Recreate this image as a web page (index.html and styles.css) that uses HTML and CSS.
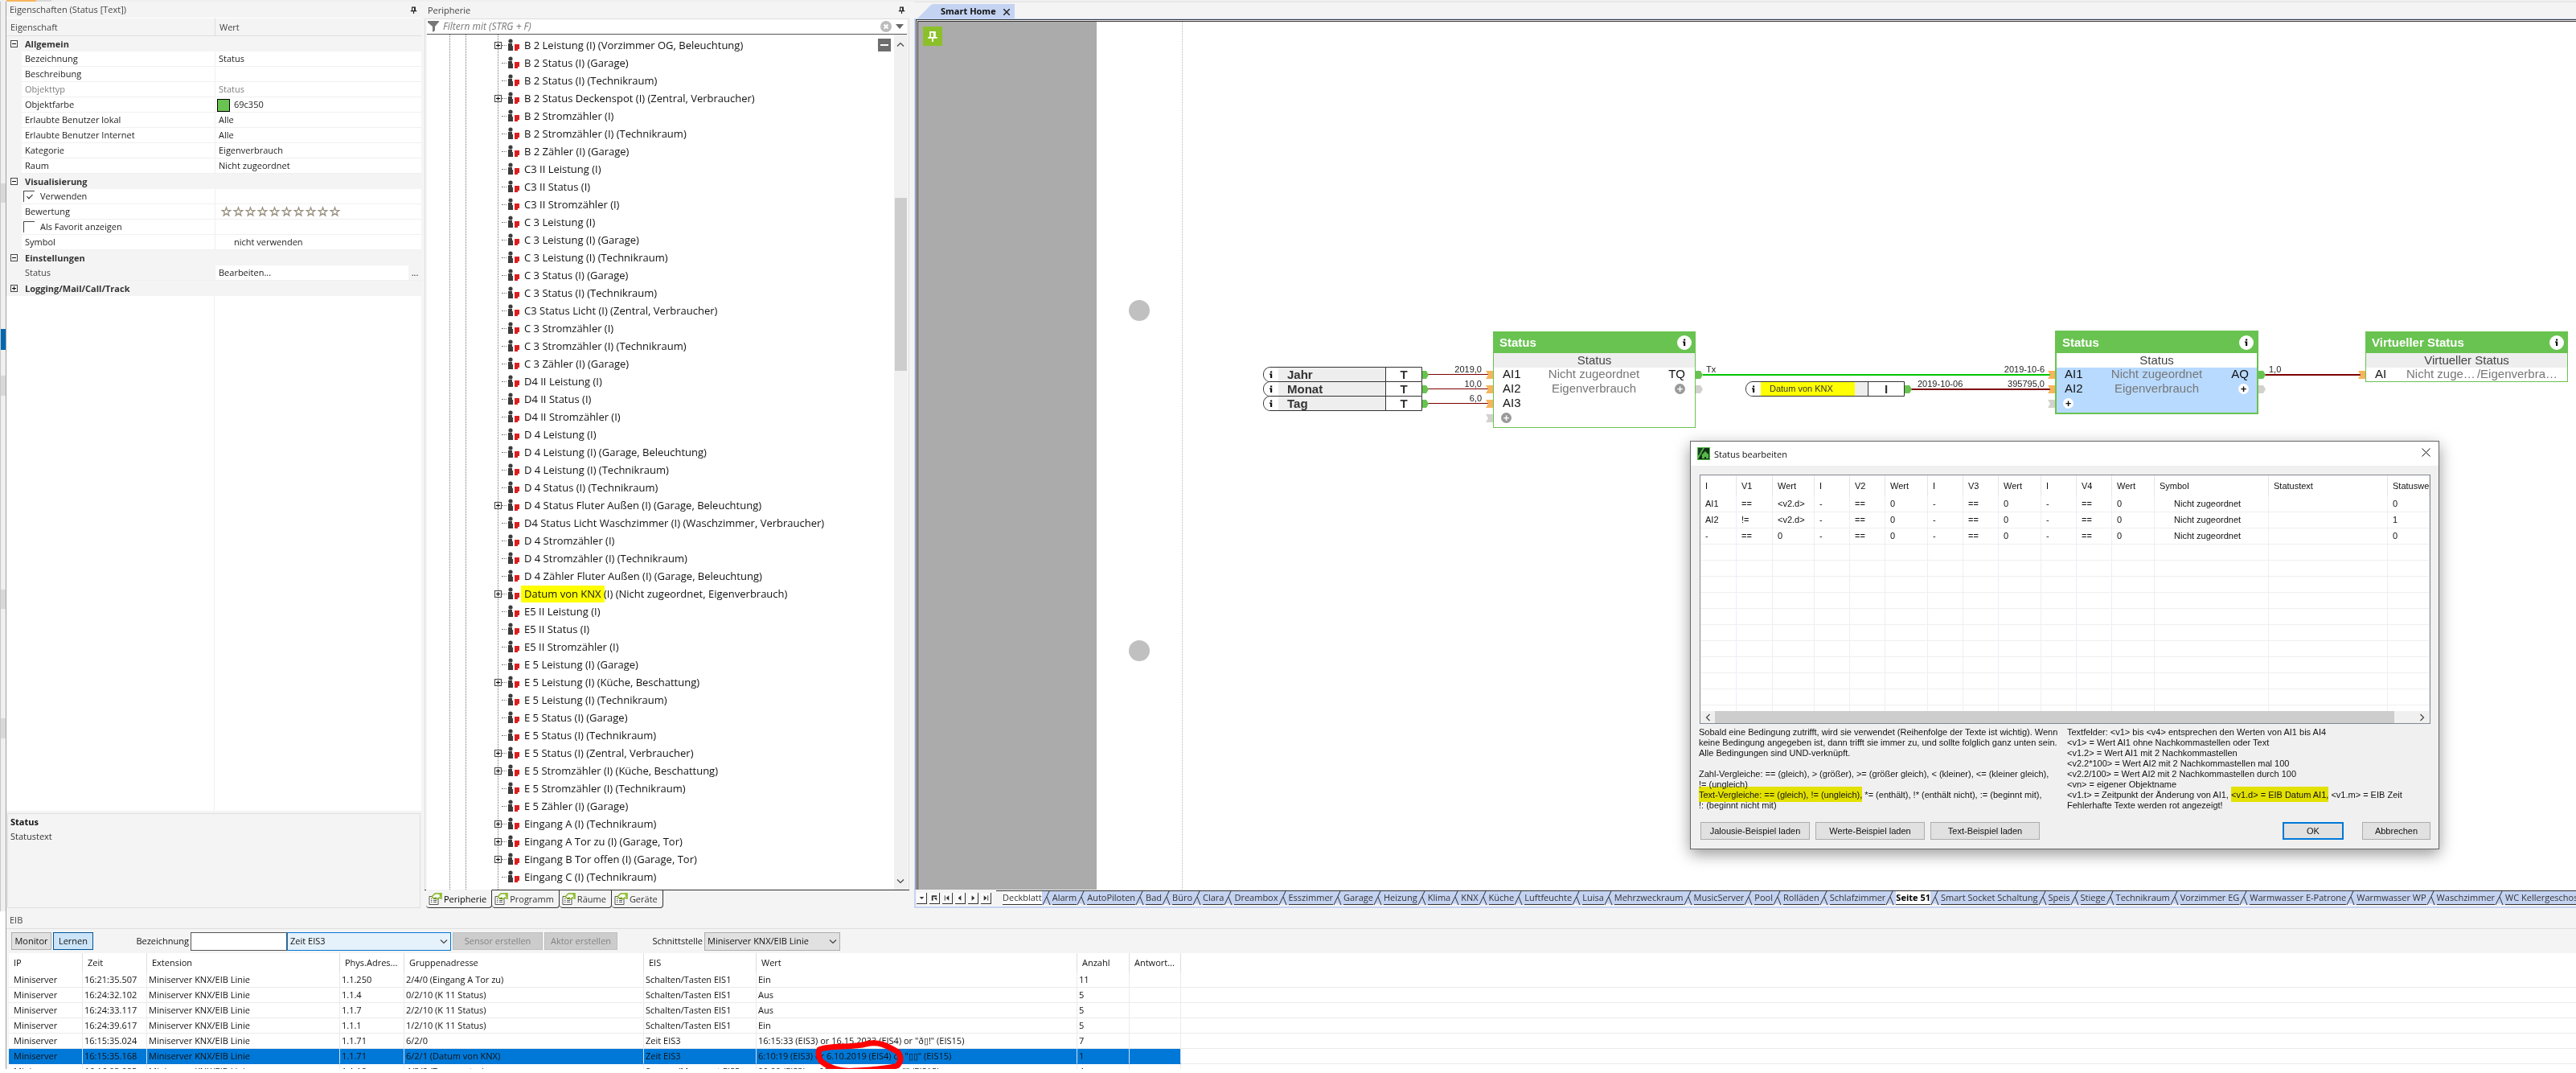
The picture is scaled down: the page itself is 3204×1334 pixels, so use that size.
FILE: index.html
```html
<!DOCTYPE html>
<html lang="de">
<head>
<meta charset="UTF-8" />
<meta name="viewport" content="width=device-width, initial-scale=1" />
<title>Smart Home</title>
<link rel="stylesheet" href="styles.css">
</head>
<body>

<svg class="defs" width="0" height="0" aria-hidden="true">
    <symbol id="pin" viewBox="0 0 12 12">
        <path d="M3.5 7V1.5h5V7M1 7.5h10M6 8v4M7.5 2v5" fill="none" stroke="currentColor" stroke-width="1.5"/>
    </symbol>
    <symbol id="knx" viewBox="0 0 15 16">
        <circle cx="3" cy="3" r="2.6" fill="#3c3c3c"/>
        <path d="M0 6h5v3h1v6H0z" fill="#3c3c3c"/>
        <path d="M8 7h6v6h-2v2H8z" fill="#dc1e1e"/>
    </symbol>
    <symbol id="props" viewBox="0 0 17 16">
        <path d="M1 4.5h11v10H1z" fill="#fff" stroke="#555"/>
        <path d="M3 7.500h1.500M6 7.500h4M3 9.500h1.500M6 9.500h4M3 11.500h1.500M6 11.500h4" stroke="#555"/>
        <path d="M4 5l4-4h5l3-1v7l-3-1-3 2-1-2-2 1z" fill="#fff" stroke="#7fb01c" stroke-width="1.400"/>
        <path d="M13 0h3v5h-2z" fill="#8cc02b"/>
    </symbol>
    <symbol id="info" viewBox="0 0 18 18">
        <circle cx="9" cy="9" r="9" fill="#fff"/>
        <path d="M8 4.500h2.200v2H8zM7 7.500h3.200V13H8V9H7z" fill="#111"/>
    </symbol>
    <symbol id="sep" viewBox="0 0 13 17">
        <path d="M2 16.500h6" stroke="#f4f4f4" stroke-width="2"/>
        <path d="M1 17L9 0M6 7l4 10" fill="none" stroke="#333"/>
    </symbol>
    <symbol id="chev" viewBox="0 0 10 6">
        <path d="M1 .5l4 4 4-4" fill="none" stroke="#444" stroke-width="1.200"/>
    </symbol>
    <symbol id="star" viewBox="0 0 15 14">
        <path d="M7.500 2l1.300 3.700h3.900l-3 2.300 1.100 3.900-3.300-2.300-3.300 2.300 1.100-3.900-3-2.300h3.900z" fill="#fff" stroke="#9a9282" stroke-width="1.300"/>
    </symbol>
</svg>

<div class="strip"><span class="strip-orange"></span><span class="strip-grey"></span></div>

<main class="workspace">
    <div class="gutter"></div>

    <section class="panel props">
        <h2 class="panel-title">Eigenschaften (Status [Text])<svg class="pin"><use href="#pin"/></svg></h2>
        <table class="prop-table">
            <colgroup><col class="c-exp"><col class="c-name"><col></colgroup>
            <thead><tr><th colspan="2">Eigenschaft</th><th>Wert</th></tr></thead>
            <tbody>
                <tr class="group"><td><span class="box"></span></td><th colspan="2">Allgemein</th></tr>
                <tr><td></td><td>Bezeichnung</td><td>Status</td></tr>
                <tr><td></td><td>Beschreibung</td><td></td></tr>
                <tr class="off"><td></td><td>Objekttyp</td><td>Status</td></tr>
                <tr><td></td><td>Objektfarbe</td><td class="color-cell"><span class="swatch"></span>69c350</td></tr>
                <tr><td></td><td>Erlaubte Benutzer lokal</td><td>Alle</td></tr>
                <tr><td></td><td>Erlaubte Benutzer Internet</td><td>Alle</td></tr>
                <tr><td></td><td>Kategorie</td><td>Eigenverbrauch</td></tr>
                <tr><td></td><td>Raum</td><td>Nicht zugeordnet</td></tr>
                <tr class="group"><td><span class="box"></span></td><th colspan="2">Visualisierung</th></tr>
                <tr><td></td><td class="check-cell"><label><input type="checkbox" checked>Verwenden</label></td><td></td></tr>
                <tr><td></td><td>Bewertung</td><td><div class="stars" id="stars"></div></td></tr>
                <tr><td></td><td class="check-cell"><label><input type="checkbox">Als Favorit anzeigen</label></td><td></td></tr>
                <tr><td></td><td>Symbol</td><td class="indent">nicht verwenden</td></tr>
                <tr class="group"><td><span class="box"></span></td><th colspan="2">Einstellungen</th></tr>
                <tr class="edit"><td></td><td>Status</td><td><div class="edit-cell"><span>Bearbeiten...</span><button type="button">...</button></div></td></tr>
                <tr class="group"><td><span class="box closed"></span></td><th colspan="2">Logging/Mail/Call/Track</th></tr>
            </tbody>
        </table>
        <div class="prop-rest"></div>
        <div class="prop-help"><b>Status</b><p>Statustext</p></div>
    </section>

    <section class="panel periphery">
        <h2 class="panel-title">Peripherie<svg class="pin"><use href="#pin"/></svg></h2>
        <div class="tree-frame">
            <div class="filter">
                <svg width="14" height="14" viewBox="0 0 14 14"><path d="M0 0h14v1L9 7v5l-3 2V7L0 2z" fill="#777"/></svg>
                <input type="text" placeholder="Filtern mit (STRG + F)" aria-label="Filtern">
                <svg width="14" height="14" viewBox="0 0 14 14"><circle cx="7" cy="7" r="7" fill="#bcbcbc"/><path d="M4.500 4.500l5 5m0-5l-5 5" stroke="#fff" stroke-width="2"/></svg>
                <svg width="10" height="6" viewBox="0 0 10 6"><path d="M0 0h10L5 6z" fill="#666"/></svg>
            </div>
            <div class="tree-body">
                <ul class="tree" id="tree"></ul>
                <button class="collapse" type="button" aria-label="Einklappen"></button>
                <div class="vscroll">
                    <svg width="10" height="6" class="flip"><use href="#chev"/></svg>
                    <div class="thumb"></div>
                    <svg width="10" height="6"><use href="#chev"/></svg>
                </div>
            </div>
        </div>
        <nav class="dock-tabs">
            <button class="active" type="button"><svg width="17" height="16"><use href="#props"/></svg>Peripherie</button>
            <button type="button"><svg width="17" height="16"><use href="#props"/></svg>Programm</button>
            <button type="button"><svg width="17" height="16"><use href="#props"/></svg>Räume</button>
            <button type="button"><svg width="17" height="16"><use href="#props"/></svg>Geräte</button>
        </nav>
    </section>

    <section class="editor">
        <div class="doc-tabs">
            <div class="doc-tab">
                <svg width="20" height="18" viewBox="0 0 20 18"><path d="M0 18L16 2q2-2 4-2v18z" fill="#c5d3f2"/></svg>
                <span>Smart Home</span>
                <button type="button" aria-label="Schließen"><svg width="8" height="8" viewBox="0 0 8 8"><path d="M0 0l8 8M8 0L0 8" stroke="#222" stroke-width="1.500"/></svg></button>
            </div>
        </div>
        <div class="frame">
            <div class="canvas">
                <div class="margin"><button class="pin-btn" type="button" aria-label="Anheften"><svg width="14" height="14"><use href="#pin"/></svg></button></div>
                <div class="sheet">
                    <div class="holes"></div>
                    <!-- wires and ports, drawn in sheet coordinates -->
                    <svg class="wires">
                        <g fill="#c0c0c0"><circle cx="53" cy="359" r="13"/><circle cx="53" cy="782" r="13"/></g>
                        <g stroke="#7d0000" stroke-width="1"><path d="M412 438.500h78M412 456.500h78M412 474.500h78"/></g>
                        <g stroke="#7d0000" stroke-width="2"><path d="M1013 457h176M1452 439h124"/></g>
                        <path d="M754 439h434" stroke="#00c400" stroke-width="2"/>
                        <g fill="#69c350">
                            <path d="M404 434h6l3 5-3 5h-6zM404 452h6l3 5-3 5h-6zM404 470h6l3 5-3 5h-6z"/>
                            <path d="M745 434h6l3 5-3 5h-6zM1005 452h6l3 5-3 5h-6zM1445 434h6l3 5-3 5h-6z"/>
                        </g>
                        <g fill="#f8b45c">
                            <path d="M484 434h9v10h-9l3-5zM484 452h9v10h-9l3-5zM484 470h9v10h-9l3-5z"/>
                            <path d="M1183 434h9v10h-9l3-5zM1183 452h9v10h-9l3-5zM1569 434h9v10h-9l3-5z"/>
                        </g>
                        <g fill="#d2d1cc">
                            <path d="M484 488h9v10h-9l3-5zM1183 470h9v10h-9l3-5zM745 452h6l3 5-3 5h-6zM1445 452h6l3 5-3 5h-6z"/>
                        </g>
                        <g class="vals">
                            <text x="479" y="436" text-anchor="end">2019,0</text>
                            <text x="479" y="454" text-anchor="end">10,0</text>
                            <text x="479" y="472" text-anchor="end">6,0</text>
                            <text x="758" y="436">Tx</text>
                            <text x="1179" y="436" text-anchor="end">2019-10-6</text>
                            <text x="1021" y="454">2019-10-06</text>
                            <text x="1179" y="454" text-anchor="end">395795,0</text>
                            <text x="1458" y="436">1,0</text>
                        </g>
                    </svg>

                    <div class="const-stack">
                        <div class="const"><svg><use href="#info"/></svg><b>Jahr</b><i>T</i></div>
                        <div class="const"><svg><use href="#info"/></svg><b>Monat</b><i>T</i></div>
                        <div class="const"><svg><use href="#info"/></svg><b>Tag</b><i>T</i></div>
                    </div>

                    <div class="const knx-input"><svg><use href="#info"/></svg><span><mark>Datum von KNX</mark></span><i>I</i></div>

                    <article class="node node-a">
                        <header>Status<svg><use href="#info"/></svg></header>
                        <h3>Status</h3>
                        <div class="ports">
                            <ul><li>AI1</li><li>AI2</li><li>AI3</li><li><span class="plus">+</span></li></ul>
                            <p>Nicht zugeordnet<br>Eigenverbrauch</p>
                            <ul class="out"><li>TQ</li><li><span class="plus">+</span></li></ul>
                        </div>
                    </article>

                    <article class="node node-b">
                        <header>Status<svg><use href="#info"/></svg></header>
                        <h3>Status</h3>
                        <div class="ports">
                            <ul><li>AI1</li><li>AI2</li><li><span class="plus">+</span></li></ul>
                            <p>Nicht zugeordnet<br>Eigenverbrauch</p>
                            <ul class="out"><li>AQ</li><li><span class="plus">+</span></li></ul>
                        </div>
                    </article>

                    <article class="node node-c">
                        <header>Virtueller Status<svg><use href="#info"/></svg></header>
                        <h3>Virtueller Status</h3>
                        <div class="ports">
                            <ul><li>AI</li></ul>
                            <p class="split"><span>Nicht zuge…</span><span>/Eigenverbra…</span></p>
                        </div>
                    </article>
                </div>
            </div>
            <div class="page-bar">
                <div class="page-nav">
                    <button type="button" aria-label="Liste"><svg viewBox="0 0 13 13"><path d="M4 5h6L7 8z"/></svg></button>
                    <button type="button" aria-label="Neu"><svg viewBox="0 0 13 13"><path d="M3 3h7v2H5v5H3zM6 6l4 4V6z"/></svg></button>
                    <button type="button" aria-label="Erste"><svg viewBox="0 0 13 13"><path d="M3 3h1v7H3zM9 3v7L5 6.500z"/></svg></button>
                    <button type="button" aria-label="Zurück"><svg viewBox="0 0 13 13"><path d="M8 3v7L4 6.500z"/></svg></button>
                    <button type="button" aria-label="Weiter"><svg viewBox="0 0 13 13"><path d="M5 3v7l4-3.500z"/></svg></button>
                    <button type="button" aria-label="Letzte"><svg viewBox="0 0 13 13"><path d="M9 3h1v7H9zM4 3v7l4-3.500z"/></svg></button>
                </div>
                <div class="pages" id="pages"></div>
            </div>
        </div>
    </section>
</main>

<section class="eib">
    <h2 class="panel-title">EIB</h2>
    <div class="toolbar">
        <button type="button">Monitor</button>
        <button class="on" type="button">Lernen</button>
        <label class="name-label" for="bez">Bezeichnung</label>
        <input type="text" id="bez">
        <span class="combo combo-type"><select aria-label="Typ"><option>Zeit EIS3</option></select><svg width="10" height="6"><use href="#chev"/></svg></span>
        <button class="wide" type="button" disabled>Sensor erstellen</button>
        <button class="wide last" type="button" disabled>Aktor erstellen</button>
        <label class="if-label" for="schn">Schnittstelle</label>
        <span class="combo combo-if"><select id="schn"><option>Miniserver KNX/EIB Linie</option></select><svg width="10" height="6"><use href="#chev"/></svg></span>
    </div>
    <div class="log-wrap">
        <table class="log">
            <colgroup><col class="w92"><col class="w80"><col class="w240"><col class="w80"><col class="w298"><col class="w140"><col class="w399"><col class="w65"><col class="w64"><col></colgroup>
            <thead><tr><th>IP</th><th>Zeit</th><th>Extension</th><th>Phys.Adres...</th><th>Gruppenadresse</th><th>EIS</th><th>Wert</th><th>Anzahl</th><th>Antwort...</th><th></th></tr></thead>
            <tbody>
                <tr><td>Miniserver</td><td>16:21:35.507</td><td>Miniserver KNX/EIB Linie</td><td>1.1.250</td><td>2/4/0 (Eingang A Tor zu)</td><td>Schalten/Tasten EIS1</td><td>Ein</td><td>11</td><td></td><td></td></tr>
                <tr><td>Miniserver</td><td>16:24:32.102</td><td>Miniserver KNX/EIB Linie</td><td>1.1.4</td><td>0/2/10 (K 11 Status)</td><td>Schalten/Tasten EIS1</td><td>Aus</td><td>5</td><td></td><td></td></tr>
                <tr><td>Miniserver</td><td>16:24:33.117</td><td>Miniserver KNX/EIB Linie</td><td>1.1.7</td><td>2/2/10 (K 11 Status)</td><td>Schalten/Tasten EIS1</td><td>Aus</td><td>5</td><td></td><td></td></tr>
                <tr><td>Miniserver</td><td>16:24:39.617</td><td>Miniserver KNX/EIB Linie</td><td>1.1.1</td><td>1/2/10 (K 11 Status)</td><td>Schalten/Tasten EIS1</td><td>Ein</td><td>5</td><td></td><td></td></tr>
                <tr><td>Miniserver</td><td>16:15:35.024</td><td>Miniserver KNX/EIB Linie</td><td>1.1.71</td><td>6/2/0</td><td>Zeit EIS3</td><td>16:15:33 (EIS3) or 16.15.2033 (EIS4) or "ð▯!" (EIS15)</td><td>7</td><td></td><td></td></tr>
                <tr class="sel"><td>Miniserver</td><td>16:15:35.168</td><td>Miniserver KNX/EIB Linie</td><td>1.1.71</td><td>6/2/1 (Datum von KNX)</td><td>Zeit EIS3</td><td class="marked">6:10:19 (EIS3) or 6.10.2019 (EIS4) or "▯▯" (EIS15)
                    <svg class="ring" width="112" height="44" viewBox="0 0 112 44"><path d="M6 14C18 8 48 12 64 7c16-4 26 2 40 10 4 6 4 12-1 17-14 4-34 5-52 6C32 42 18 36 9 29c-4-5-5-10-3-15z" fill="none" stroke="#f00" stroke-width="7" stroke-linejoin="round"/></svg></td><td>1</td><td></td><td></td></tr>
                <tr><td>Miniserver</td><td>16:16:03.085</td><td>Miniserver KNX/EIB Linie</td><td>1.1.12</td><td>4/3/2 (Temperatur)</td><td>Summe/Messwert EIS5</td><td>00:00 (EIS3) or 00.00.2000 (EIS4) or "" (EIS15)</td><td>4</td><td></td><td></td></tr>
            </tbody>
        </table>
    </div>
</section>

<section class="dialog" role="dialog" aria-label="Status bearbeiten">
    <header>
        <svg width="16" height="16" viewBox="0 0 16 16"><path d="M0 0h16v16H0z" fill="#57b947"/><path d="M1 15L9 1h6v14z" fill="#12301a"/><path d="M5 10l5-5 5 5h-1v4h-3v-2H9v2H6v-4z" fill="#57b947"/><path d="M1 1h6L2 10H1z" fill="#1c4424"/></svg>
        <span>Status bearbeiten</span>
        <button type="button" aria-label="Schließen"><svg width="11" height="11" viewBox="0 0 11 11"><path d="M.5.5l10 10m0-10l-10 10" stroke="#111"/></svg></button>
    </header>
    <div class="cond-frame">
        <table class="cond">
            <colgroup><col class="w45"><col class="w45"><col class="w52"><col class="w44"><col class="w44"><col class="w53"><col class="w44"><col class="w44"><col class="w53"><col class="w44"><col class="w44"><col class="w53"><col class="w142"><col class="w148"><col></colgroup>
            <thead><tr><th>I</th><th>V1</th><th>Wert</th><th>I</th><th>V2</th><th>Wert</th><th>I</th><th>V3</th><th>Wert</th><th>I</th><th>V4</th><th>Wert</th><th>Symbol</th><th>Statustext</th><th>Statuswe</th></tr></thead>
            <tbody id="cond"></tbody>
        </table>
        <div class="hscroll">
            <svg width="10" height="6" class="left"><use href="#chev"/></svg>
            <div class="thumb"></div>
            <svg width="10" height="6" class="right"><use href="#chev"/></svg>
        </div>
    </div>
    <div class="help">
        <p>Sobald eine Bedingung zutrifft, wird sie verwendet (Reihenfolge der Texte ist wichtig). Wenn<br>keine Bedingung angegeben ist, dann trifft sie immer zu, und sollte folglich ganz unten sein.<br>Alle Bedingungen sind UND-verknüpft.<br><br>Zahl-Vergleiche: == (gleich), &gt; (größer), &gt;= (größer gleich), &lt; (kleiner), &lt;= (kleiner gleich),<br>!= (ungleich)<br><mark>Text-Vergleiche: == (gleich), != (ungleich),</mark> *= (enthält), !* (enthält nicht), := (beginnt mit),<br>!: (beginnt nicht mit)</p>
        <p>Textfelder: &lt;v1&gt; bis &lt;v4&gt; entsprechen den Werten von AI1 bis AI4<br>&lt;v1&gt; = Wert AI1 ohne Nachkommastellen oder Text<br>&lt;v1.2&gt; = Wert AI1 mit 2 Nachkommastellen<br>&lt;v2.2*100&gt; = Wert AI2 mit 2 Nachkommastellen mal 100<br>&lt;v2.2/100&gt; = Wert AI2 mit 2 Nachkommastellen durch 100<br>&lt;vn&gt; = eigener Objektname<br>&lt;v1.t&gt; = Zeitpunkt der Änderung von AI1, <mark>&lt;v1.d&gt; = EIB Datum AI1,</mark> &lt;v1.m&gt; = EIB Zeit<br>Fehlerhafte Texte werden rot angezeigt!</p>
    </div>
    <footer>
        <button type="button">Jalousie-Beispiel laden</button>
        <button type="button">Werte-Beispiel laden</button>
        <button type="button">Text-Beispiel laden</button>
        <span class="grow"></span>
        <button class="ok" type="button">OK</button>
        <button class="cancel" type="button">Abbrechen</button>
    </footer>
</section>

<script>
    // a leading "+" marks an entry that can be expanded
    const entries = [
        "+B 2 Leistung (I) (Vorzimmer OG, Beleuchtung)", "B 2 Status (I) (Garage)", "B 2 Status (I) (Technikraum)",
        "+B 2 Status Deckenspot (I) (Zentral, Verbraucher)", "B 2 Stromzähler (I)", "B 2 Stromzähler (I) (Technikraum)",
        "B 2 Zähler (I) (Garage)", "C3 II Leistung (I)", "C3 II Status (I)", "C3 II Stromzähler (I)", "C 3 Leistung (I)",
        "C 3 Leistung (I) (Garage)", "C 3 Leistung (I) (Technikraum)", "C 3 Status (I) (Garage)", "C 3 Status (I) (Technikraum)",
        "C3 Status Licht (I) (Zentral, Verbraucher)", "C 3 Stromzähler (I)", "C 3 Stromzähler (I) (Technikraum)",
        "C 3 Zähler (I) (Garage)", "D4 II Leistung (I)", "D4 II Status (I)", "D4 II Stromzähler (I)", "D 4 Leistung (I)",
        "D 4 Leistung (I) (Garage, Beleuchtung)", "D 4 Leistung (I) (Technikraum)", "D 4 Status (I) (Technikraum)",
        "+D 4 Status Fluter Außen (I) (Garage, Beleuchtung)", "D4 Status Licht Waschzimmer (I) (Waschzimmer, Verbraucher)",
        "D 4 Stromzähler (I)", "D 4 Stromzähler (I) (Technikraum)", "D 4 Zähler Fluter Außen (I) (Garage, Beleuchtung)",
        "+<mark>Datum von KNX</mark> (I) (Nicht zugeordnet, Eigenverbrauch)", "E5 II Leistung (I)", "E5 II Status (I)",
        "E5 II Stromzähler (I)", "E 5 Leistung (I) (Garage)", "+E 5 Leistung (I) (Küche, Beschattung)",
        "E 5 Leistung (I) (Technikraum)", "E 5 Status (I) (Garage)", "E 5 Status (I) (Technikraum)",
        "+E 5 Status (I) (Zentral, Verbraucher)", "+E 5 Stromzähler (I) (Küche, Beschattung)",
        "E 5 Stromzähler (I) (Technikraum)", "E 5 Zähler (I) (Garage)", "+Eingang A (I) (Technikraum)",
        "+Eingang A Tor zu (I) (Garage, Tor)", "+Eingang B Tor offen (I) (Garage, Tor)", "Eingang C (I) (Technikraum)"
    ];
    document.getElementById("tree").innerHTML = entries.map(e => {
        const node = e[0] === "+";
        return `<li><span class="${node ? "box closed" : "nobox"}"></span><span class="dash"></span>` +
            `<svg width="15" height="16"><use href="#knx"/></svg><span>${node ? e.slice(1) : e}</span></li>`;
    }).join("");

    document.getElementById("stars").innerHTML = '<svg width="15" height="14"><use href="#star"/></svg>'.repeat(10);

    const pages = ["Deckblatt", "Alarm", "AutoPiloten", "Bad", "Büro", "Clara", "Dreambox", "Esszimmer", "Garage", "Heizung",
        "Klima", "KNX", "Küche", "Luftfeuchte", "Luisa", "Mehrzweckraum", "MusicServer", "Pool", "Rolläden", "Schlafzimmer",
        "Seite 51", "Smart Socket Schaltung", "Speis", "Stiege", "Technikraum", "Vorzimmer EG", "Warmwasser E-Patrone",
        "Warmwasser WP", "Waschzimmer", "WC Kellergeschoss"];
    document.getElementById("pages").innerHTML = pages.map(p => {
        const cls = p === "Seite 51" ? "active" : p === "Deckblatt" ? "cover" : "";
        return `<button type="button" class="${cls}">${p}</button><svg width="13" height="17"><use href="#sep"/></svg>`;
    }).join("");

    const rows = [
        ["AI1", "==", "&lt;v2.d&gt;", "0"],
        ["AI2", "!=", "&lt;v2.d&gt;", "1"],
        ["-", "==", "0", "0"]
    ];
    let body = "";
    rows.forEach(([i, op, wert, value]) => {
        body += `<tr><td>${i}</td><td>${op}</td><td>${wert}</td>` + "<td>-</td><td>==</td><td>0</td>".repeat(3) +
            `<td class="sym">Nicht zugeordnet</td><td></td><td>${value}</td></tr>`;
    });
    body += `<tr>${"<td></td>".repeat(15)}</tr>`.repeat(10);
    body += `<tr class="rest">${"<td></td>".repeat(15)}</tr>`;
    document.getElementById("cond").innerHTML = body;
</script>
</body>
</html>
```
FILE: styles.css
```css
* {
    box-sizing: border-box;
}
body {
    margin: 0;
    height: 100vh;
    overflow: hidden;
    display: flex;
    flex-direction: column;
    position: relative;
    padding-bottom: 5px;
    background: #fff;
    color: #111;
    font-family: "Open Sans", "Noto Sans", sans-serif;
    font-size: 11px;
    line-height: 18px;
}
h2, h3, p, ul {
    margin: 0;
    padding: 0;
    font-weight: normal;
    font-size: inherit;
}
ul {
    list-style: none;
}
button, input, select {
    font: inherit;
    color: inherit;
    margin: 0;
    padding: 0;
}
table {
    border-collapse: separate;
    border-spacing: 0;
    table-layout: fixed;
    width: 100%;
}
th {
    text-align: left;
    font-weight: normal;
}
th, td {
    padding: 0;
    white-space: nowrap;
    overflow: hidden;
}
mark {
    background: #ff0;
    color: inherit;
}
svg {
    flex: none;
}
.defs {
    position: absolute;
}
.strip {
    flex: none;
    display: flex;
    height: 2px;
    padding-left: 8px;
    background: #efefef;
}
.strip-orange {
    width: 37px;
    background: #f8b45c;
}
.strip-grey {
    width: 19px;
    background: #d8d8d8;
}

/* workspace */
.workspace {
    flex: none;
    display: grid;
    grid-template-columns: 8px 516px 612px minmax(0, 1fr);
    background: #f4f4f4;
}
.gutter {
    border-left: 1px solid #c8c8c8;
    border-right: 1px solid #a0a0a0;
    background: linear-gradient(transparent 226px, #d8d8d8 226px 250px, transparent 250px 407px, #0067b0 407px 433px, transparent 433px 465px, #d8d8d8 465px 490px, transparent 490px 731px, #d8d8d8 731px 755px, transparent 755px 891px, #d8d8d8 891px 916px, transparent 916px) #f0f0f0;
}
.panel {
    display: flex;
    flex-direction: column;
}
.panel-title {
    display: flex;
    justify-content: space-between;
    align-items: center;
    height: 20px;
    padding: 0 5px 0 4px;
    color: #444;
}
.pin {
    width: 9px;
    height: 9px;
    color: #222;
}

/* properties */
.prop-table {
    color: #1c1c1c;
}
.c-exp {
    width: 19px;
}
.c-name {
    width: 240px;
}
.prop-table thead th {
    height: 23px;
    padding-left: 5px;
    border-top: 1px solid #fff;
    border-bottom: 1px solid #dedede;
    color: #444;
}
.prop-table thead th + th {
    border-left: 1px solid #dedede;
}
.prop-table tbody tr {
    height: 19px;
}
.prop-table td {
    height: 19px;
    line-height: 18px;
}
.prop-table td + td {
    padding-left: 4px;
    background: #fff;
    border-bottom: 1px solid #f0f0f0;
}
.prop-table td:nth-child(3) {
    border-left: 1px solid #f0f0f0;
}
.prop-table .group th {
    padding-left: 4px;
    font-weight: bold;
    color: #333;
}
.prop-table .off td {
    color: #808080;
}
/* expander: one bar for open, crossed bars for closed */
.box {
    display: block;
    flex: none;
    width: 9px;
    height: 9px;
    border: 1px solid #444;
    background: linear-gradient(#000, #000) center / 5px 1px no-repeat #fff;
}
.closed {
    background: linear-gradient(#000, #000) center / 5px 1px no-repeat, linear-gradient(#000, #000) center / 1px 5px no-repeat #fff;
}
.prop-table .box {
    margin-left: 5px;
}
.prop-table .color-cell {
    padding-left: 2px;
}
.swatch {
    display: inline-block;
    width: 16px;
    height: 16px;
    margin-right: 5px;
    border: 1px solid #000;
    background: #69c350;
    vertical-align: middle;
}
.prop-table .check-cell {
    padding-left: 2px;
}
.check-cell label {
    display: flex;
    align-items: center;
    gap: 7px;
}
.check-cell input {
    appearance: none;
    width: 14px;
    height: 14px;
    border-top: 1px solid #444;
    border-left: 1px solid #444;
}
.check-cell input:checked::after {
    content: "";
    display: block;
    width: 3px;
    height: 6px;
    margin: 2px 0 0 5px;
    border: solid #222;
    border-width: 0 1px 1px 0;
    transform: rotate(45deg);
}
.stars {
    display: flex;
    padding-left: 2px;
}
.prop-table .indent {
    padding-left: 23px;
}
.prop-table .edit td {
    padding-left: 0;
    background: #f4f4f4;
}
.prop-table .edit td:nth-child(2) {
    padding-left: 4px;
    color: #444;
}
.edit-cell {
    display: flex;
}
.edit-cell span {
    flex: 1;
    padding-left: 4px;
    background: #fff;
}
.edit-cell button {
    width: 16px;
    border: none;
    background: none;
}
.prop-rest {
    flex: 1;
    background: linear-gradient(#f0f0f0, #f0f0f0) 258px 0 / 1px 100% no-repeat #fff;
}
.prop-help {
    min-height: 118px;
    margin: 3px 1px 4px;
    padding: 1px 3px;
    border: 1px solid #dedede;
    color: #333;
}
.prop-help b {
    color: #111;
}

/* periphery tree */
.periphery {
    padding: 0 5px 4px 4px;
}
.periphery .panel-title {
    height: 21px;
}
.tree-frame {
    border: 1px solid #dedede;
    border-bottom: none;
    padding: 0 2px;
}
.filter {
    display: flex;
    align-items: center;
    gap: 5px;
    height: 19px;
    padding: 0 4px 0 1px;
    background: #fff;
    border-bottom: 1px solid #555;
}
.filter input {
    flex: 1;
    border: none;
    background: none;
    font-style: italic;
    font-size: 12px;
    outline: none;
}
.filter input::placeholder {
    color: #777;
}
.tree-body {
    position: relative;
    display: flex;
    background: #fff;
}
.tree {
    flex: 1;
    padding: 2px 0 5px;
    font-size: 13px;
    line-height: 22px;
    white-space: nowrap;
    color: #111;
    background:
        repeating-linear-gradient(#777 0 1px, transparent 1px 2px) 28px 0 / 1px 100% no-repeat,
        repeating-linear-gradient(#777 0 1px, transparent 1px 2px) 48px 0 / 1px 100% no-repeat,
        repeating-linear-gradient(#777 0 1px, transparent 1px 2px) 88px 0 / 1px 100% no-repeat;
}
.tree li {
    display: flex;
    align-items: center;
    height: 22px;
    padding-left: 84px;
}
.tree li svg {
    margin: 0 5px 0 2px;
}
.nobox {
    width: 9px;
}
.dash {
    width: 6px;
    border-top: 1px dotted #777;
}
.tree mark {
    margin: 0 -4px;
    padding: 1px 4px 2px;
}
.collapse {
    position: absolute;
    top: 5px;
    right: 20px;
    width: 16px;
    height: 16px;
    border: none;
    background: linear-gradient(#fff, #fff) center / 10px 2px no-repeat #6e6e6e;
}
.vscroll {
    display: flex;
    flex-direction: column;
    align-items: center;
    width: 16px;
    padding: 9px 0 7px;
    background: #f0f0f0;
}
.vscroll .thumb {
    flex: none;
    width: 15px;
    height: 215px;
    margin: 188px 0 auto;
    background: #cdcdcd;
}
.flip {
    transform: rotate(180deg);
}
.dock-tabs {
    display: flex;
    height: 23px;
    padding-left: 2px;
    color: #333;
    background: linear-gradient(#333, #333) 0 0 / 100% 1px no-repeat;
}
.dock-tabs button {
    display: flex;
    align-items: center;
    gap: 2px;
    padding: 0 6px 0 3px;
    border: 1px solid #333;
    border-left: none;
    border-radius: 0 0 4px 4px;
    background: #f4f4f4;
}
.dock-tabs .active {
    border-top-color: #f4f4f4;
    color: #000;
}

/* editor */
.editor {
    display: flex;
    flex-direction: column;
    padding: 0 0 4px 1px;
}
.doc-tabs {
    display: flex;
    align-items: flex-end;
    height: 21px;
    padding-left: 4px;
    border-top: 1px solid #e2e2e2;
}
.doc-tab {
    display: flex;
    height: 18px;
    font-weight: bold;
    line-height: 17px;
}
.doc-tab span {
    padding: 0 3px 0 9px;
    background: #c5d3f2;
}
.doc-tab button {
    width: 20px;
    border: none;
    background: #c5d3f2;
}
.frame {
    flex: 1;
    display: flex;
    flex-direction: column;
    border: solid #c5d3f2;
    border-width: 1px 0 2px 2px;
}
.canvas {
    flex: 1;
    display: flex;
    border: 3px double #333;
    border-width: 3px 0 0 3px;
}
.margin {
    width: 222px;
    padding: 6px;
    background: #ababab;
}
.pin-btn {
    display: flex;
    align-items: center;
    justify-content: center;
    width: 24px;
    height: 24px;
    border: none;
    background: #8cc02b;
    color: #fff;
}
.sheet {
    flex: 1;
    position: relative;
    overflow: hidden;
    background: #fff;
    font-family: "Liberation Sans", Arial, sans-serif;
    font-size: 15px;
    line-height: 18px;
}
.holes {
    width: 107px;
    height: 100%;
    border-right: 1px dotted #bbb;
}
.wires {
    position: absolute;
    left: 0;
    top: 0;
    width: 100%;
    height: 100%;
}
.vals {
    font-size: 11px;
    fill: #222;
}
.const-stack {
    position: absolute;
    left: 207px;
    top: 429px;
    width: 198px;
}
.const {
    display: flex;
    height: 19px;
    margin-bottom: -1px;
    border: 1px solid #333;
    border-radius: 9px 0 0 9px;
    background: #fff;
    color: #333;
    overflow: hidden;
    line-height: 17px;
}
.const svg {
    width: 18px;
    height: 18px;
}
.const b, .const span {
    flex: 1;
    padding-left: 11px;
    background: #eee;
}
.const i {
    width: 45px;
    border-left: 1px solid #333;
    font-style: normal;
    font-weight: bold;
    text-align: center;
}
.knx-input {
    position: absolute;
    left: 807px;
    top: 447px;
    width: 198px;
    margin: 0;
}
.knx-input span {
    padding: 0;
    font-size: 11px;
}
.knx-input mark {
    display: block;
    width: 117px;
    padding-left: 11px;
}
.node {
    position: absolute;
    border: 1px solid #69c350;
    background: #fff;
}
.node header {
    display: flex;
    align-items: center;
    justify-content: space-between;
    height: 26px;
    padding: 0 4px 0 7px;
    background: #69c350;
    color: #fff;
    font-weight: bold;
}
.node header svg {
    width: 18px;
    height: 18px;
}
.node h3 {
    height: 18px;
    line-height: 17px;
    text-align: center;
    color: #444;
    background: #eee;
}
.ports {
    display: flex;
    margin-top: -1px;
    padding: 0 12px 0 11px;
    color: #111;
}
.ports ul {
    width: 30px;
}
.ports li {
    height: 18px;
}
.ports .out {
    display: flex;
    flex-direction: column;
    align-items: flex-end;
}
.ports p {
    flex: 1;
    text-align: center;
    color: #777;
    white-space: nowrap;
}
.ports .split {
    display: flex;
    justify-content: space-between;
    padding-left: 9px;
}
.plus {
    display: block;
    width: 13px;
    height: 13px;
    margin: 3px 0 0 -2px;
    border-radius: 50%;
    background: #999;
    color: #fff;
    font-weight: bold;
    font-size: 13px;
    line-height: 13px;
    text-align: center;
}
.node-a {
    left: 493px;
    top: 385px;
    width: 252px;
}
.node-a .ports {
    min-height: 73px;
}
.node-b {
    left: 1192px;
    top: 384px;
    width: 253px;
    border-width: 2px;
    background: #b8daff;
}
.node-b h3 {
    background: #fff;
}
.node-b .ports {
    padding: 0 10px;
}
.node-b .plus {
    background: #fff;
    color: #111;
}
.node-c {
    left: 1578px;
    top: 385px;
    width: 252px;
}

/* sheet tabs below the canvas */
.page-bar {
    display: flex;
    align-items: flex-start;
    height: 21px;
    overflow: hidden;
}
.page-nav {
    display: flex;
    gap: 3px;
    padding: 4px 6px 0 1px;
}
.page-nav button {
    width: 13px;
    height: 14px;
    border: solid #333;
    border-width: 0 1px 1px 0;
    background: #fafafa;
}
.page-nav svg {
    display: block;
    width: 12px;
    height: 13px;
    fill: #333;
}
.pages {
    display: flex;
    flex: 1;
    margin-top: 1px;
    padding-left: 8px;
    border-top: 1px solid #333;
    overflow: hidden;
}
.pages button {
    flex: none;
    height: 17px;
    border: none;
    border-bottom: 1px solid #333;
    background: #c5d3f2;
    color: #333;
    line-height: 16px;
}
.pages svg {
    background: #c5d3f2;
}
.pages .cover, .pages .active {
    background: #fff;
}
.pages .active {
    font-weight: bold;
    color: #000;
}

/* EIB monitor */
.eib {
    flex: 1;
    min-height: 0;
    display: flex;
    flex-direction: column;
    margin-left: 7px;
    border-left: 1px solid #a0a0a0;
    background: #f4f4f4;
}
.eib .panel-title {
    height: 22px;
    border-bottom: 1px solid #dedede;
}
.toolbar {
    display: flex;
    align-items: center;
    height: 30px;
    padding-left: 6px;
    gap: 2px;
}
.toolbar button {
    width: 50px;
    height: 22px;
    border: 1px solid #adadad;
    background: #e1e1e1;
}
.toolbar .on {
    border-color: #005499;
    background: #cce4f7;
}
.toolbar .wide {
    width: 112px;
}
.toolbar .last {
    width: 91px;
}
.toolbar button:disabled {
    border-color: #bfbfbf;
    background: #ccc;
    color: #838383;
}
.toolbar input {
    width: 120px;
    height: 23px;
    border: 1px solid #555;
    background: #fff;
}
.name-label {
    width: 117px;
    text-align: right;
}
.if-label {
    width: 104px;
    text-align: right;
}
.combo {
    position: relative;
}
.combo svg {
    position: absolute;
    right: 4px;
    top: 9px;
}
.combo select {
    appearance: none;
    width: 100%;
    height: 23px;
    padding-left: 3px;
    border: 1px solid #adadad;
    background: #e1e1e1;
}
.combo-type {
    width: 204px;
    margin-left: -2px;
}
.combo-type select {
    border-color: #0078d7;
    background: #e5f1fb;
}
.combo-if {
    width: 169px;
}
.log-wrap {
    flex: 1;
    min-height: 0;
    margin-left: 3px;
    overflow: hidden;
    background: #fff;
}
.log th {
    height: 24px;
    padding-left: 6px;
    border-right: 1px solid #dedede;
}
.log td {
    height: 19px;
    padding-left: 2px;
    line-height: 18px;
    border-right: 1px solid #ebebeb;
    border-bottom: 1px solid #ebebeb;
}
.log td:first-child {
    padding-left: 6px;
}
.log th:last-child, .log td:last-child {
    border-right: none;
}
.log .sel td:not(:last-child) {
    background: #0078d7;
    border-color: #cfe3f5 #cfe3f5 #0078d7;
}
.log .marked {
    position: relative;
    overflow: visible;
}
.ring {
    position: absolute;
    left: 72px;
    top: -13px;
    z-index: 1;
}
.w92 { width: 92px; }
.w80 { width: 80px; }
.w240 { width: 240px; }
.w298 { width: 298px; }
.w140 { width: 140px; }
.w399 { width: 399px; }
.w65 { width: 65px; }
.w64 { width: 64px; }

/* dialog */
.dialog {
    position: absolute;
    left: 2102px;
    top: 548px;
    width: 932px;
    border: 1px solid #666;
    background: #f0f0f0;
    box-shadow: 0 6px 18px rgba(0, 0, 0, .4);
    font-family: "Liberation Sans", Arial, sans-serif;
    line-height: 13px;
}
.dialog header {
    display: flex;
    align-items: center;
    height: 30px;
    padding: 0 9px 0 8px;
    background: #fff;
}
.dialog header span {
    flex: 1;
    padding-left: 5px;
    font-family: "Open Sans", "Noto Sans", sans-serif;
    font-size: 11px;
}
.dialog header button {
    width: 13px;
    height: 14px;
    border: none;
    background: none;
}
.cond-frame {
    margin: 11px 10px 2px 11px;
    border: 1px solid #828790;
    background: #fff;
}
.cond th {
    height: 26px;
    padding-left: 6px;
    border-right: 1px solid #e5e5e5;
}
.cond td {
    height: 20px;
    padding-left: 6px;
    border-right: 1px solid #eaeff7;
    border-bottom: 1px solid #efefef;
}
.cond .sym {
    padding-left: 24px;
}
.cond .rest td {
    height: 7px;
    border-bottom: none;
}
.w44 { width: 44px; }
.w45 { width: 45px; }
.w52 { width: 52px; }
.w53 { width: 53px; }
.w142 { width: 142px; }
.w148 { width: 148px; }
.hscroll {
    display: flex;
    align-items: center;
    gap: 4px;
    padding: 0 4px;
    background: #f0f0f0;
}
.hscroll .thumb {
    flex: 1;
    height: 15px;
    margin-right: 26px;
    background: #cdcdcd;
}
.left {
    transform: rotate(90deg);
}
.right {
    transform: rotate(-90deg);
}
.help {
    display: grid;
    grid-template-columns: 458px 1fr;
    padding: 2px 10px;
    white-space: nowrap;
}
.help mark {
    padding: 4px 0 3px;
    background: #f2f000;
    mix-blend-mode: multiply;
}
.dialog footer {
    display: flex;
    padding: 12px 10px 11px 12px;
    gap: 7px;
}
.dialog footer button {
    width: 136px;
    height: 22px;
    border: 1px solid #adadad;
    background: #e1e1e1;
}
.grow {
    flex: 1;
}
.dialog footer .ok {
    width: 76px;
    margin-right: 16px;
    border: 2px solid #0078d7;
}
.dialog footer .cancel {
    width: 85px;
}
```
